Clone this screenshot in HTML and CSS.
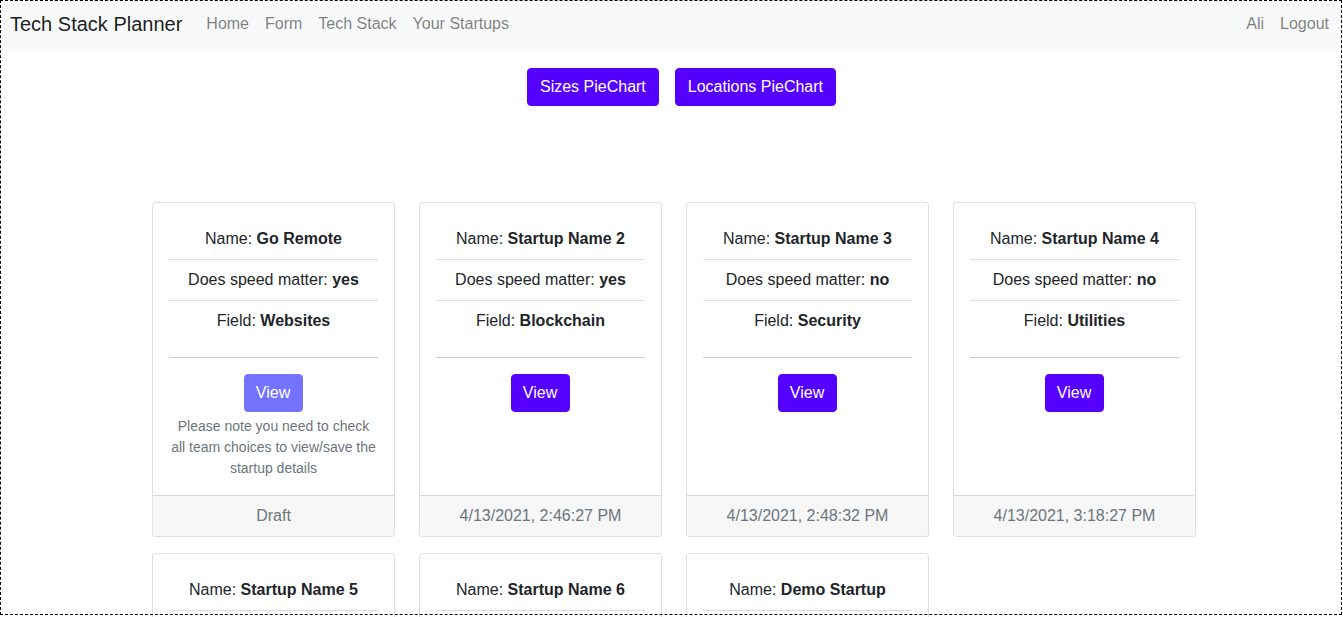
FILE: index.html
```html
<!DOCTYPE html>
<html>
<head>
<meta charset="utf-8">
<title>Tech Stack Planner</title>
<link rel="stylesheet" href="styles.css">
</head>
<body>
<div class="frame"></div>
<nav class="navbar">
  <a class="brand" href="#">Tech Stack Planner</a>
  <ul class="nav">
    <li><a href="#">Home</a></li>
    <li><a href="#">Form</a></li>
    <li><a href="#">Tech Stack</a></li>
    <li><a href="#">Your Startups</a></li>
  </ul>
  <ul class="nav nav-right">
    <li><a href="#">Ali</a></li>
    <li><a href="#">Logout</a></li>
  </ul>
</nav>

<div class="charts">
  <button class="btn">Sizes PieChart</button>
  <button class="btn">Locations PieChart</button>
</div>

<div class="grid">
  <div class="card">
    <div class="card-body">
      <ul class="list">
        <li>Name: <b>Go Remote</b></li>
        <li>Does speed matter: <b>yes</b></li>
        <li>Field: <b>Websites</b></li>
      </ul>
      <hr>
      <button class="btn btn-sm disabled">View</button>
      <p class="note">Please note you need to check all team choices to view/save the startup details</p>
    </div>
    <div class="card-footer">Draft</div>
  </div>
  <div class="card">
    <div class="card-body">
      <ul class="list">
        <li>Name: <b>Startup Name 2</b></li>
        <li>Does speed matter: <b>yes</b></li>
        <li>Field: <b>Blockchain</b></li>
      </ul>
      <hr>
      <button class="btn btn-sm">View</button>
    </div>
    <div class="card-footer">4/13/2021, 2:46:27 PM</div>
  </div>
  <div class="card">
    <div class="card-body">
      <ul class="list">
        <li>Name: <b>Startup Name 3</b></li>
        <li>Does speed matter: <b>no</b></li>
        <li>Field: <b>Security</b></li>
      </ul>
      <hr>
      <button class="btn btn-sm">View</button>
    </div>
    <div class="card-footer">4/13/2021, 2:48:32 PM</div>
  </div>
  <div class="card">
    <div class="card-body">
      <ul class="list">
        <li>Name: <b>Startup Name 4</b></li>
        <li>Does speed matter: <b>no</b></li>
        <li>Field: <b>Utilities</b></li>
      </ul>
      <hr>
      <button class="btn btn-sm">View</button>
    </div>
    <div class="card-footer">4/13/2021, 3:18:27 PM</div>
  </div>
  <div class="card">
    <div class="card-body">
      <ul class="list">
        <li>Name: <b>Startup Name 5</b></li>
        <li>Does speed matter: <b>yes</b></li>
        <li>Field: <b>Websites</b></li>
      </ul>
      <hr>
      <button class="btn btn-sm">View</button>
    </div>
    <div class="card-footer">4/13/2021, 3:20:00 PM</div>
  </div>
  <div class="card">
    <div class="card-body">
      <ul class="list">
        <li>Name: <b>Startup Name 6</b></li>
        <li>Does speed matter: <b>no</b></li>
        <li>Field: <b>Blockchain</b></li>
      </ul>
      <hr>
      <button class="btn btn-sm">View</button>
    </div>
    <div class="card-footer">4/13/2021, 3:22:00 PM</div>
  </div>
  <div class="card">
    <div class="card-body">
      <ul class="list">
        <li>Name: <b>Demo Startup</b></li>
        <li>Does speed matter: <b>yes</b></li>
        <li>Field: <b>Security</b></li>
      </ul>
      <hr>
      <button class="btn btn-sm">View</button>
    </div>
    <div class="card-footer">4/13/2021, 3:25:00 PM</div>
  </div>
</div>
</body>
</html>
```

FILE: styles.css
```css
html {
  overflow: hidden;
}
body {
  margin: 0;
  font-family: "Liberation Sans", Arial, sans-serif;
  font-size: 16px;
  line-height: 24px;
  color: #212529;
  background: #fff;
}
.frame {
  position: fixed;
  top: 0;
  left: 0;
  width: 1342px;
  height: 615px;
  box-sizing: border-box;
  border: 1px dashed #000;
  pointer-events: none;
  z-index: 10;
}
.navbar {
  display: flex;
  align-items: flex-start;
  height: 52px;
  box-sizing: border-box;
  padding: 9px 6px 0 10px;
  background: #f8f9fa;
}
.brand {
  font-size: 20px;
  line-height: 30px;
  color: rgba(0, 0, 0, 0.9);
  text-decoration: none;
  margin-right: 16px;
}
.nav {
  display: flex;
  list-style: none;
  margin: 0;
  padding: 0;
}
.nav a {
  display: block;
  padding: 0 8px;
  line-height: 30px;
  color: rgba(0, 0, 0, 0.5);
  text-decoration: none;
}
.nav-right {
  margin-left: auto;
}
.charts {
  display: flex;
  justify-content: center;
  gap: 16px;
  margin-top: 16px;
  padding-left: 20px;
}
.btn {
  font-family: inherit;
  font-size: 16px;
  line-height: 24px;
  padding: 6px 12px;
  color: #fff;
  background: #5500ff;
  border: 1px solid #5500ff;
  border-radius: 4px;
  cursor: pointer;
}
.btn-sm {
  padding: 6px 12px 6px 11px;
}
.btn.disabled {
  background: #7373ff;
  border-color: #7373ff;
}
.grid {
  display: grid;
  grid-template-columns: repeat(4, 243px);
  column-gap: 24px;
  row-gap: 16px;
  justify-content: center;
  margin-top: 96px;
  padding-left: 5px;
}
.card {
  display: flex;
  flex-direction: column;
  border: 1px solid rgba(0, 0, 0, 0.125);
  border-radius: 4px;
  background: #fff;
  text-align: center;
}
.card-body {
  flex: 1;
  padding: 16px;
}
.list {
  list-style: none;
  margin: 0;
  padding: 0;
}
.list li {
  padding: 8px 0;
  border-bottom: 1px solid rgba(0, 0, 0, 0.125);
}
.list li:last-child {
  border-bottom: none;
}
.list b {
  font-weight: 700;
}
hr {
  margin: 16px 0;
  border: 0;
  border-top: 1px solid #c8c8cf;
}
.note {
  margin: 4px 0 0;
  font-size: 14px;
  line-height: 21px;
  color: #6c757d;
}
.card-footer {
  padding: 8px 16px;
  background: #f7f7f7;
  border-top: 1px solid rgba(0, 0, 0, 0.125);
  color: #6c757d;
  border-radius: 0 0 4px 4px;
}
```
